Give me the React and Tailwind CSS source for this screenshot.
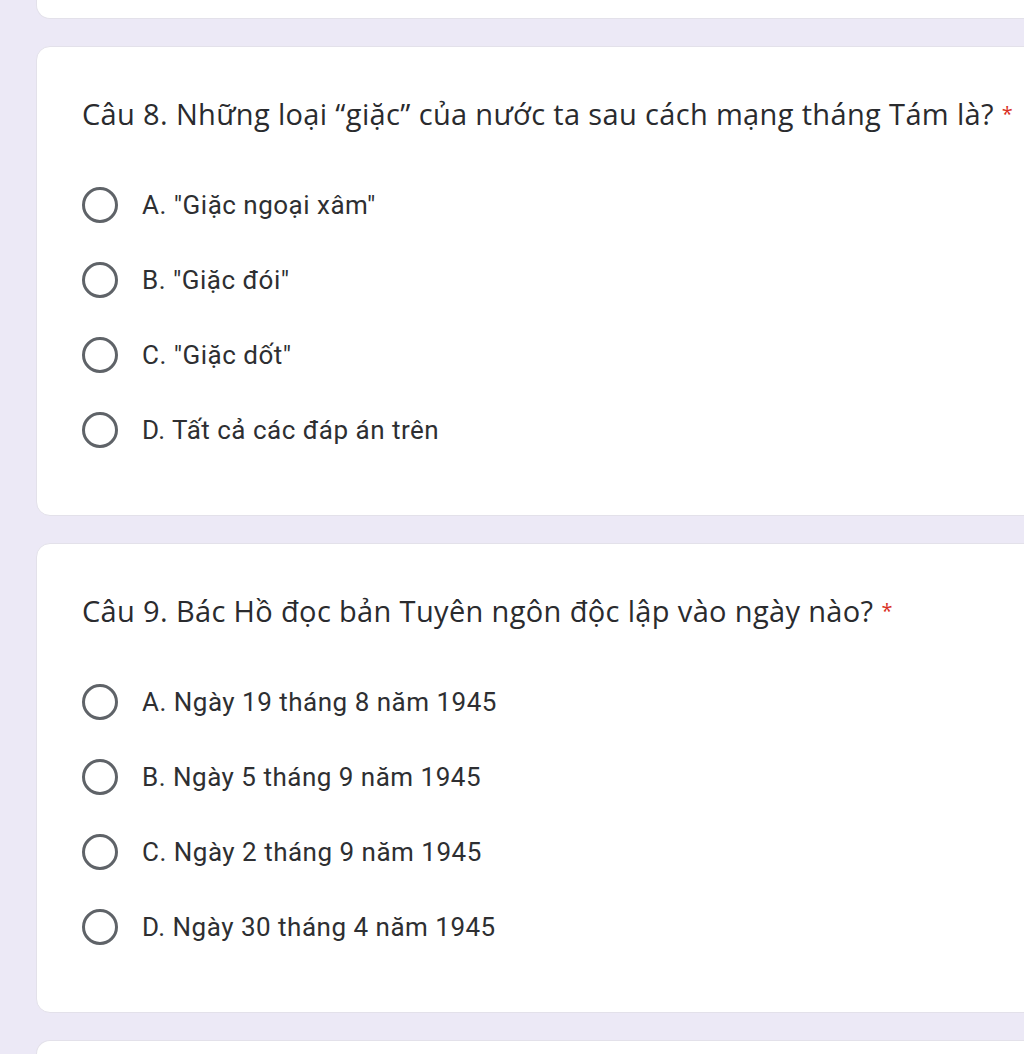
import React from "react";

const questions = [
  {
    title: "Câu 8. Những loại “giặc” của nước ta sau cách mạng tháng Tám là?",
    options: ['A. "Giặc ngoại xâm"', 'B. "Giặc đói"', 'C. "Giặc dốt"', "D. Tất cả các đáp án trên"],
  },
  {
    title: "Câu 9. Bác Hồ đọc bản Tuyên ngôn độc lập vào ngày nào?",
    options: [
      "A. Ngày 19 tháng 8 năm 1945",
      "B. Ngày 5 tháng 9 năm 1945",
      "C. Ngày 2 tháng 9 năm 1945",
      "D. Ngày 30 tháng 4 năm 1945",
    ],
  },
];

function Radio() {
  return <div className="w-[36px] h-[36px] rounded-full border-[3px] border-[#5f6368] shrink-0" />;
}

function QuestionCard({ q }) {
  return (
    <div className="h-[470px] bg-white rounded-[14px] border border-[#e3e1ea] pl-[45px] pt-[47px]">
      <h2 className="text-[29px] leading-[40px] text-[#2a2b2e] font-['Open_Sans',sans-serif] tracking-[0.35px] whitespace-nowrap">
        {q.title} <span className="text-[#d93025] text-[20px] align-top">*</span>
      </h2>
      <div className="flex flex-col gap-[39px] mt-[53px]">
        {q.options.map((o) => (
          <div key={o} className="flex items-center gap-[24px] h-[36px]">
            <Radio />
            <span className="text-[26px] text-[#2e2f32] font-['Roboto',sans-serif] tracking-[0.5px]">{o}</span>
          </div>
        ))}
      </div>
    </div>
  );
}

export default function App() {
  return (
    <div className="w-[1024px] h-[1054px] overflow-hidden bg-[#ece9f6] pl-[36px]">
      <div className="w-[1010px] flex flex-col gap-[27px]">
        <div className="h-[19px] bg-white rounded-b-[14px] border border-t-0 border-[#e3e1ea]" />
        {questions.map((q) => (
          <QuestionCard key={q.title} q={q} />
        ))}
        <div className="h-[40px] bg-white rounded-t-[14px] border border-b-0 border-[#e3e1ea]" />
      </div>
    </div>
  );
}
